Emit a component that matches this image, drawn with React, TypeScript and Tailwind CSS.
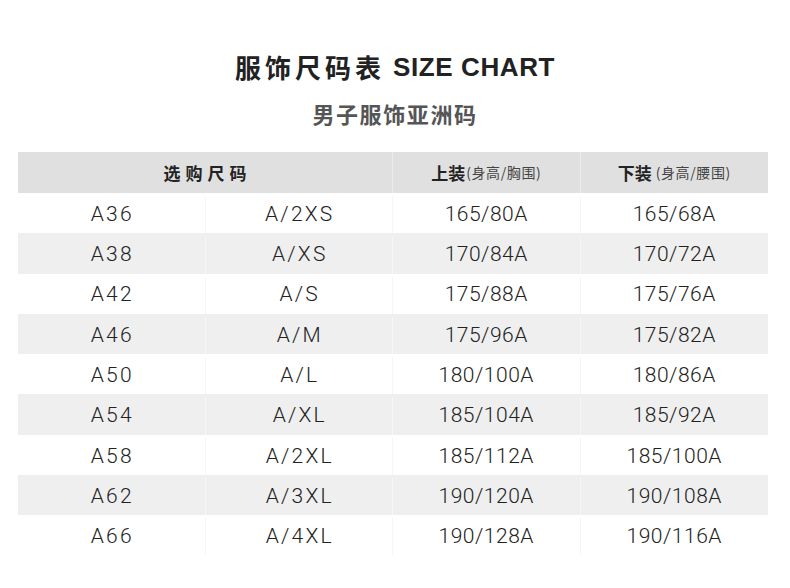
import React from "react";

const rows: [string, string, string, string][] = [
  ["A36", "A/2XS", "165/80A", "165/68A"],
  ["A38", "A/XS", "170/84A", "170/72A"],
  ["A42", "A/S", "175/88A", "175/76A"],
  ["A46", "A/M", "175/96A", "175/82A"],
  ["A50", "A/L", "180/100A", "180/86A"],
  ["A54", "A/XL", "185/104A", "185/92A"],
  ["A58", "A/2XL", "185/112A", "185/100A"],
  ["A62", "A/3XL", "190/120A", "190/108A"],
  ["A66", "A/4XL", "190/128A", "190/116A"],
];

const cjk = { fontFamily: '"Noto Sans CJK SC", "Noto Sans", sans-serif' };
const num = { fontFamily: 'Roboto, "Noto Sans", sans-serif' };

export default function App() {
  return (
    <div className="w-[790px] h-[588px] bg-white overflow-hidden text-[#222]">
      <div className="pt-[48px] flex flex-col items-center">
        <div className="flex items-center h-[38px] leading-[38px] text-[#222]">
          <span style={cjk} className="text-[26px] font-bold tracking-[4px]">服饰尺码表</span>
          <span style={{ fontFamily: '"Liberation Sans", Arial, sans-serif' }} className="ml-[8px] text-[26px] font-bold tracking-[0.6px]">SIZE CHART</span>
        </div>
        <div style={cjk} className="mt-[10px] h-[34px] leading-[34px] text-[22px] font-semibold tracking-[1.6px] text-[#555]">
          男子服饰亚洲码
        </div>
      </div>
      <div className="ml-[18px] mt-[22px] w-[750px]">
        <div className="grid grid-cols-4 h-[41px] bg-[#e0e0e0]">
          <div style={cjk} className="col-span-2 flex items-center justify-center text-[17px] font-bold tracking-[5px] text-[#222] border-r border-[#ebebeb] pl-[5px]">
            选购尺码
          </div>
          <div style={cjk} className="flex items-center justify-center border-r border-[#ebebeb]">
            <span className="text-[17px] font-bold text-[#222]">上装</span>
            <span className="text-[14px] text-[#444] tracking-[0.6px] ml-[1px]">(身高/胸围)</span>
          </div>
          <div style={cjk} className="flex items-center justify-center">
            <span className="text-[17px] font-bold text-[#222]">下装</span>
            <span className="text-[14px] text-[#444] tracking-[0.6px] ml-[4px]">(身高/腰围)</span>
          </div>
        </div>
        {rows.map((r, i) => (
          <div
            key={r[0]}
            className={`grid grid-cols-4 h-[40.3px] pt-[3px] ${i % 2 === 1 ? "bg-[#efefef]" : "bg-white"}`}
          >
            <div style={num} className="flex items-center justify-center text-[21px] font-light tracking-[2.2px] pl-[2px] border-r border-[#f6f6f6]">
              {r[0]}
            </div>
            <div style={num} className="flex items-center justify-center text-[21px] font-light tracking-[2.2px] pl-[2px] border-r border-[#f6f6f6]">
              {r[1]}
            </div>
            <div style={num} className="flex items-center justify-center text-[21px] font-light tracking-[0.5px] border-r border-[#f6f6f6]">
              {r[2]}
            </div>
            <div style={num} className="flex items-center justify-center text-[21px] font-light tracking-[0.5px]">
              {r[3]}
            </div>
          </div>
        ))}
      </div>
    </div>
  );
}
